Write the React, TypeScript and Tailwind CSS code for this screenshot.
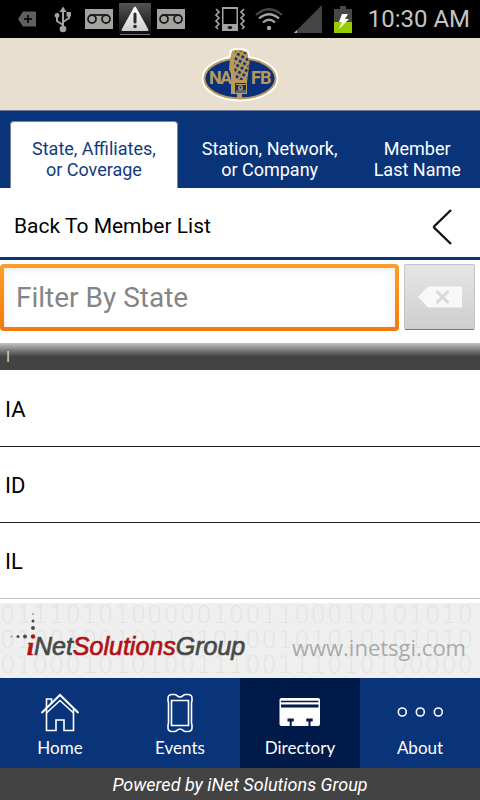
import { useState } from 'react';
import type { ReactNode } from 'react';

const TABS = [
  { id: 'state', lines: ['State, Affiliates,', 'or Coverage'], width: 'flex-[168]' },
  { id: 'station', lines: ['Station, Network,', 'or Company'], width: 'flex-[184]' },
  { id: 'member', lines: ['Member', 'Last Name'], width: 'flex-[111]' },
];

const STATES = ['IA', 'ID', 'IL'];

const BINARY_ROWS = [
  '01110101000001001100010101010',
  '01001001011010100101010101010',
  '01000101010011100111010100000',
];

function Voicemail({ className }: { className: string }) {
  return (
    <svg className={className} width="28" height="20" viewBox="0 0 28 20" fill="none" aria-hidden="true">
      <rect width="28" height="20" fill="#a3a3a0" />
      <g stroke="#1c1c1c" strokeWidth="1.8">
        <circle cx="7" cy="10" r="4" />
        <circle cx="21" cy="10" r="4" />
        <path d="M6 6H22" />
      </g>
    </svg>
  );
}

function StatusBar() {
  return (
    <div className="flex h-[38px] items-center justify-between bg-black pr-[10px] pl-[18px]">
      <div className="flex items-center">
        <svg width="18" height="16" viewBox="0 0 18 16" aria-hidden="true">
          <path d="M5 0.5H18V15.5H5L0 8Z" fill="#5f5f5c" />
          <path d="M10 4V12M6 8H14" stroke="#000" strokeWidth="1.6" />
        </svg>
        <svg className="ml-[18px]" width="18" height="27" viewBox="0 0 18 27" fill="none" stroke="#a3a3a0" strokeWidth="2" aria-hidden="true">
          <path d="M9 22V4M9 19L3 15V10M9 16L15 12V8" />
          <path d="M5.5 6L9 0.5L12.5 6Z" fill="#a3a3a0" stroke="none" />
          <circle cx="9" cy="23" r="3.3" fill="#a3a3a0" stroke="none" />
          <circle cx="3" cy="9.5" r="2.4" fill="#a3a3a0" stroke="none" />
          <rect x="12.5" y="6" width="4.5" height="4.5" fill="#a3a3a0" stroke="none" />
        </svg>
        <Voicemail className="ml-[13px]" />
        <svg className="ml-[6px]" width="32" height="32" viewBox="0 0 32 32" aria-hidden="true">
          <defs>
            <linearGradient id="tile" x1="0" y1="0" x2="0" y2="1">
              <stop offset="0" stopColor="#555" />
              <stop offset="1" stopColor="#0c0c0c" />
            </linearGradient>
            <linearGradient id="warn" x1="0" y1="0" x2="0" y2="1">
              <stop offset="0" stopColor="#fff" />
              <stop offset="1" stopColor="#cfcfcf" />
            </linearGradient>
          </defs>
          <rect width="32" height="32" rx="1" fill="url(#tile)" />
          <path d="M16 4.5L28.5 27H3.5Z" fill="url(#warn)" stroke="url(#warn)" strokeWidth="2" strokeLinejoin="round" />
          <path d="M16 11V19" stroke="#2a2a2a" strokeWidth="3" strokeLinecap="round" />
          <circle cx="16" cy="23.5" r="1.8" fill="#2a2a2a" />
          <path d="M1 31.5H31" stroke="#777" />
        </svg>
        <Voicemail className="ml-[6px]" />
      </div>

      <div className="flex items-center">
        <svg width="30" height="26" viewBox="0 0 30 26" fill="none" stroke="#a3a3a0" aria-hidden="true">
          <path d="M7 1H23V25H7Z" fill="#a3a3a0" stroke="none" />
          <path d="M8.5 3H21.5V18H8.5Z" fill="#000" stroke="none" />
          <ellipse cx="15" cy="21.5" rx="2.2" ry="1.5" fill="#000" stroke="none" />
          <path d="M1 3L4 6L1 9L4 12L1 15L4 18L1 21L3 23" strokeWidth="1.6" />
          <path d="M29 3L26 6L29 9L26 12L29 15L26 18L29 21L27 23" strokeWidth="1.6" />
        </svg>
        <svg className="ml-[10px]" width="28" height="23" viewBox="0 0 28 23" fill="none" strokeWidth="2.2" aria-hidden="true">
          <path d="M1 7Q14 -4.5 27 7" stroke="#484848" />
          <path d="M4 10.5Q14 2 24 10.5" stroke="#a3a3a0" />
          <path d="M8 14.5Q14 9 20 14.5" stroke="#a3a3a0" />
          <circle cx="14" cy="20" r="2.2" fill="#a3a3a0" />
        </svg>
        <svg className="ml-[11px]" width="28" height="28" viewBox="0 0 28 28" aria-hidden="true">
          <path d="M28 0V28H0Z" fill="#444" />
          <path d="M3 25V28H0Z" fill="#bbb" />
        </svg>
        <svg className="ml-3" width="18" height="27" viewBox="0 0 18 27" aria-hidden="true">
          <path d="M6 0H12V3H18V27H0V3H6Z" fill="#484848" />
          <rect y="16" width="18" height="11" fill="#99cc00" />
          <path d="M8 8H14L11 13H15L5 23L8 16H5Z" fill="#fff" />
        </svg>
        <span className="ml-4 text-[24px] leading-none text-[#c4c4c4]">10:30 AM</span>
      </div>
    </div>
  );
}

function NafbLogo() {
  return (
    <svg width="80" height="56" viewBox="0 0 80 56" role="img" aria-label="NAFB">
      <defs>
        <pattern id="mesh" width="5" height="5" patternUnits="userSpaceOnUse" patternTransform="rotate(30)">
          <rect width="5" height="5" fill="#b99a5b" />
          <rect width="2.8" height="2.8" fill="#0a3079" />
        </pattern>
      </defs>
      <g fill="#fff" stroke="#fff" strokeWidth="4" strokeLinejoin="round">
        <ellipse cx="40" cy="30.5" rx="36.5" ry="21" />
        <path d="M32 3Q39 0 47 4L49.5 14L47 34V46H42V51H37V46H31L29 23L30 11Z" />
      </g>
      <ellipse cx="40" cy="30.5" rx="35.5" ry="20" fill="#0a3079" stroke="#b99a5b" strokeWidth="2" />
      <g fill="#b99a5b" fontFamily="Roboto, sans-serif" fontSize="18" fontWeight="700">
        <text x="9" y="36">N</text>
        <text x="20" y="36">A</text>
        <text x="51" y="36">F</text>
        <text x="60" y="36">B</text>
      </g>
      <path d="M32 3Q39 0 47 4L49.5 14L47 34V46H42V51H37V46H31V26L29 21L30 11Z" fill="#b99a5b" />
      <path d="M35 3Q42 2 47 5L49 14L46.5 32H35.5L34 18Z" fill="url(#mesh)" />
      <path d="M35 35H46V44.5H35Z" fill="#0a3079" />
      <path d="M36 36.5H46M36 43H46" stroke="#b99a5b" />
      <circle cx="40.5" cy="39.7" r="2.5" fill="#b99a5b" />
      <circle cx="40.5" cy="39.7" r="1.1" fill="#0a3079" />
    </svg>
  );
}

function InetBanner() {
  return (
    <a href="#inetsgi" className="relative block h-[75px] overflow-hidden bg-[#efefef]">
      <div
        aria-hidden="true"
        className="absolute inset-0 pr-[6px] font-['DejaVu_Sans',sans-serif] text-[24px] leading-[25px] font-extralight text-[#dfe5e0]"
      >
        {BINARY_ROWS.map((row) => (
          <div key={row} className="flex">
            {row.split('').map((digit, i) => (
              <span key={i} className="min-w-0 flex-1">{digit}</span>
            ))}
          </div>
        ))}
      </div>
      <div className="relative flex h-full items-center justify-between pr-[14px] pl-[10px]">
        <svg width="240" height="60" viewBox="0 0 240 60" aria-label="iNetSolutionsGroup" role="img">
          <g fill="#4c4c4c">
            <circle cx="23" cy="3" r="1" fill="#999" />
            <circle cx="23" cy="10" r="1.5" />
            <circle cx="23" cy="17" r="2" />
            <circle cx="1.5" cy="25.5" r="1" fill="#999" />
            <circle cx="8" cy="25.5" r="1.5" />
            <circle cx="15" cy="25.5" r="2" />
          </g>
          <circle cx="23" cy="25.5" r="2.2" fill="#b01217" />
          <text
            x="17"
            y="44"
            fill="#464a49"
            stroke="#464a49"
            strokeWidth="0.7"
            fontFamily="'Liberation Sans', sans-serif"
            fontSize="25"
            fontStyle="italic"
          >
            <tspan fill="#b01217" stroke="#b01217" fontFamily="'Liberation Serif', serif" fontWeight="700">ı</tspan>
            Net
            <tspan fill="#b01217" stroke="#b01217">Solutions</tspan>
            Group
          </text>
        </svg>
        <span className="mt-3 font-['Open_Sans',sans-serif] text-[22px] leading-7 text-[#a8aaa9]">
          www.inetsgi.com
        </span>
      </div>
    </a>
  );
}

function NavItem({ label, active, onClick, children }: { label: string; active: boolean; onClick: () => void; children: ReactNode }) {
  return (
    <button
      type="button"
      onClick={onClick}
      className={`flex h-[90px] flex-1 flex-col items-center pt-[14px] ${active ? 'bg-[#001b49]' : 'bg-[#09347a]'}`}
    >
      <svg width="48" height="42" viewBox="0 0 48 42" fill="none" stroke="#fff" strokeWidth="1.6" aria-hidden="true">
        {children}
      </svg>
      <span className="mt-[2px] font-['Lato',sans-serif] text-[17px] leading-6 text-white">{label}</span>
    </button>
  );
}

export default function App() {
  const [tab, setTab] = useState('state');
  const [page, setPage] = useState('Directory');
  const [filter, setFilter] = useState('');

  const visible = STATES.filter((s) => s.startsWith(filter.toUpperCase()));

  return (
    <div className="flex min-h-screen flex-col bg-white font-['Roboto',sans-serif] text-black">
      <StatusBar />

      <header className="flex h-[73px] justify-center border-b border-[#6b7c9b] bg-[#e8dfce] pt-[10px]">
        <NafbLogo />
      </header>

      <div role="tablist" className="flex h-[77px] bg-[#09347a] pt-[10px] pr-[7px] pl-[10px]">
        {TABS.map((t) => (
          <button
            key={t.id}
            type="button"
            role="tab"
            aria-selected={tab === t.id}
            onClick={() => setTab(t.id)}
            className={`${t.width} rounded-t-sm border border-b-0 pt-2 text-[18px] leading-[21px] ${
              tab === t.id ? 'border-[#7c8796] bg-white text-[#123b80]' : 'border-transparent text-white'
            }`}
          >
            {t.lines.map((line) => (
              <span key={line} className="block">{line}</span>
            ))}
          </button>
        ))}
      </div>

      <button type="button" className="flex h-[72px] items-center justify-between border-b-3 border-[#09347a] pt-2 pr-7 pl-[14px] text-[21px]">
        Back To Member List
        <svg width="20" height="36" viewBox="0 0 20 36" fill="none" stroke="#111" strokeWidth="2.4" aria-hidden="true">
          <path d="M19 1L2.5 17Q1.5 18 2.5 19L19 35" />
        </svg>
      </button>

      <div className="flex gap-[5px] pt-1 pr-[5px] pb-3">
        <div className="min-w-0 flex-1 rounded bg-linear-to-b from-[#ff9d2b] to-[#f27a0a] p-1">
          <input
            type="text"
            aria-label="Filter By State"
            placeholder="Filter By State"
            value={filter}
            onChange={(e) => setFilter(e.target.value)}
            className="block h-[59px] w-full bg-white px-3 text-[28px] shadow-[inset_0_2px_8px_#ececec] outline-none placeholder:text-[#858585]"
          />
        </div>
        <button
          type="button"
          aria-label="Clear filter"
          onClick={() => setFilter('')}
          className="flex h-[66px] w-[71px] items-center justify-center rounded-xs border border-[#c4c4c4] border-b-[#777] bg-linear-to-b from-[#e6e6e6] to-[#cecece]"
        >
          <svg width="44" height="22" viewBox="0 0 44 22" aria-hidden="true">
            <path d="M10 0.5H44V21.5H10L0 11Z" fill="#f8f8f8" />
            <path d="M18.5 5L30.5 17M30.5 5L18.5 17" stroke="#d9d9d9" strokeWidth="3" />
          </svg>
        </button>
      </div>

      <h2 className="h-[27px] bg-linear-to-b from-[#c4c4c4] to-[#434343] to-50% pl-[6px] text-[15px] leading-7 text-[#d0d0d0]">I</h2>

      <ul className="min-h-[229px] grow pt-px">
        {visible.map((s) => (
          <li key={s} className="border-b border-[#222] last:border-[#c4c4c4]">
            <button type="button" className="flex h-[75px] w-full items-center pt-0.5 pl-[5px] text-[22px] leading-7">
              {s}
            </button>
          </li>
        ))}
      </ul>

      <div className="pt-1">
        <InetBanner />
      </div>

      <nav className="flex">
        <NavItem label="Home" active={page === 'Home'} onClick={() => setPage('Home')}>
          <path d="M5.5 21L24 3L42.5 21" strokeWidth="2" />
          <path d="M10.5 17V38.5H20V28H28V38.5H37.5V17" />
          <path d="M10.5 21L24 8.5L37.5 21" />
          <path d="M10.5 16V7H15.5V11" />
        </NavItem>
        <NavItem label="Events" active={page === 'Events'} onClick={() => setPage('Events')}>
          <path d="M16 2.5H18.5C21 2.5 21 5 24 5S27 2.5 29.5 2.5H32Q36 2.5 36 6.5V8.5L35.5 11V31L36 33.500V35.5Q36 39.5 32 39.5H29.5C27 39.5 27 37 24 37S21 39.5 18.5 39.5H16Q12 39.5 12 35.5V33.5L12.5 31V11L12 8.5V6.5Q12 2.5 16 2.5Z" />
          <path d="M15.5 8.5H32.5V33.5H15.5Z" />
        </NavItem>
        <NavItem label="Directory" active={page === 'Directory'} onClick={() => setPage('Directory')}>
          <rect x="3.5" y="6" width="40.5" height="28" rx="2" fill="#fff" stroke="none" />
          <path d="M5 9.500H42.5" stroke="#001b49" />
          <path d="M5 14H42.5" stroke="#001b49" strokeWidth="3" />
          <path d="M11.5 28H17.8M30.3 28H36.7" stroke="#001b49" strokeWidth="3" />
          <path d="M14.7 28V34M33.5 28V34" stroke="#001b49" strokeWidth="2" />
        </NavItem>
        <NavItem label="About" active={page === 'About'} onClick={() => setPage('About')}>
          <circle cx="6.3" cy="20" r="4" />
          <circle cx="24.3" cy="20" r="4" />
          <circle cx="42.3" cy="20" r="4" />
        </NavItem>
      </nav>

      <footer className="h-8 bg-[#434343] pt-px text-center text-[18px] leading-8 text-white italic">
        Powered by iNet Solutions Group
      </footer>
    </div>
  );
}
